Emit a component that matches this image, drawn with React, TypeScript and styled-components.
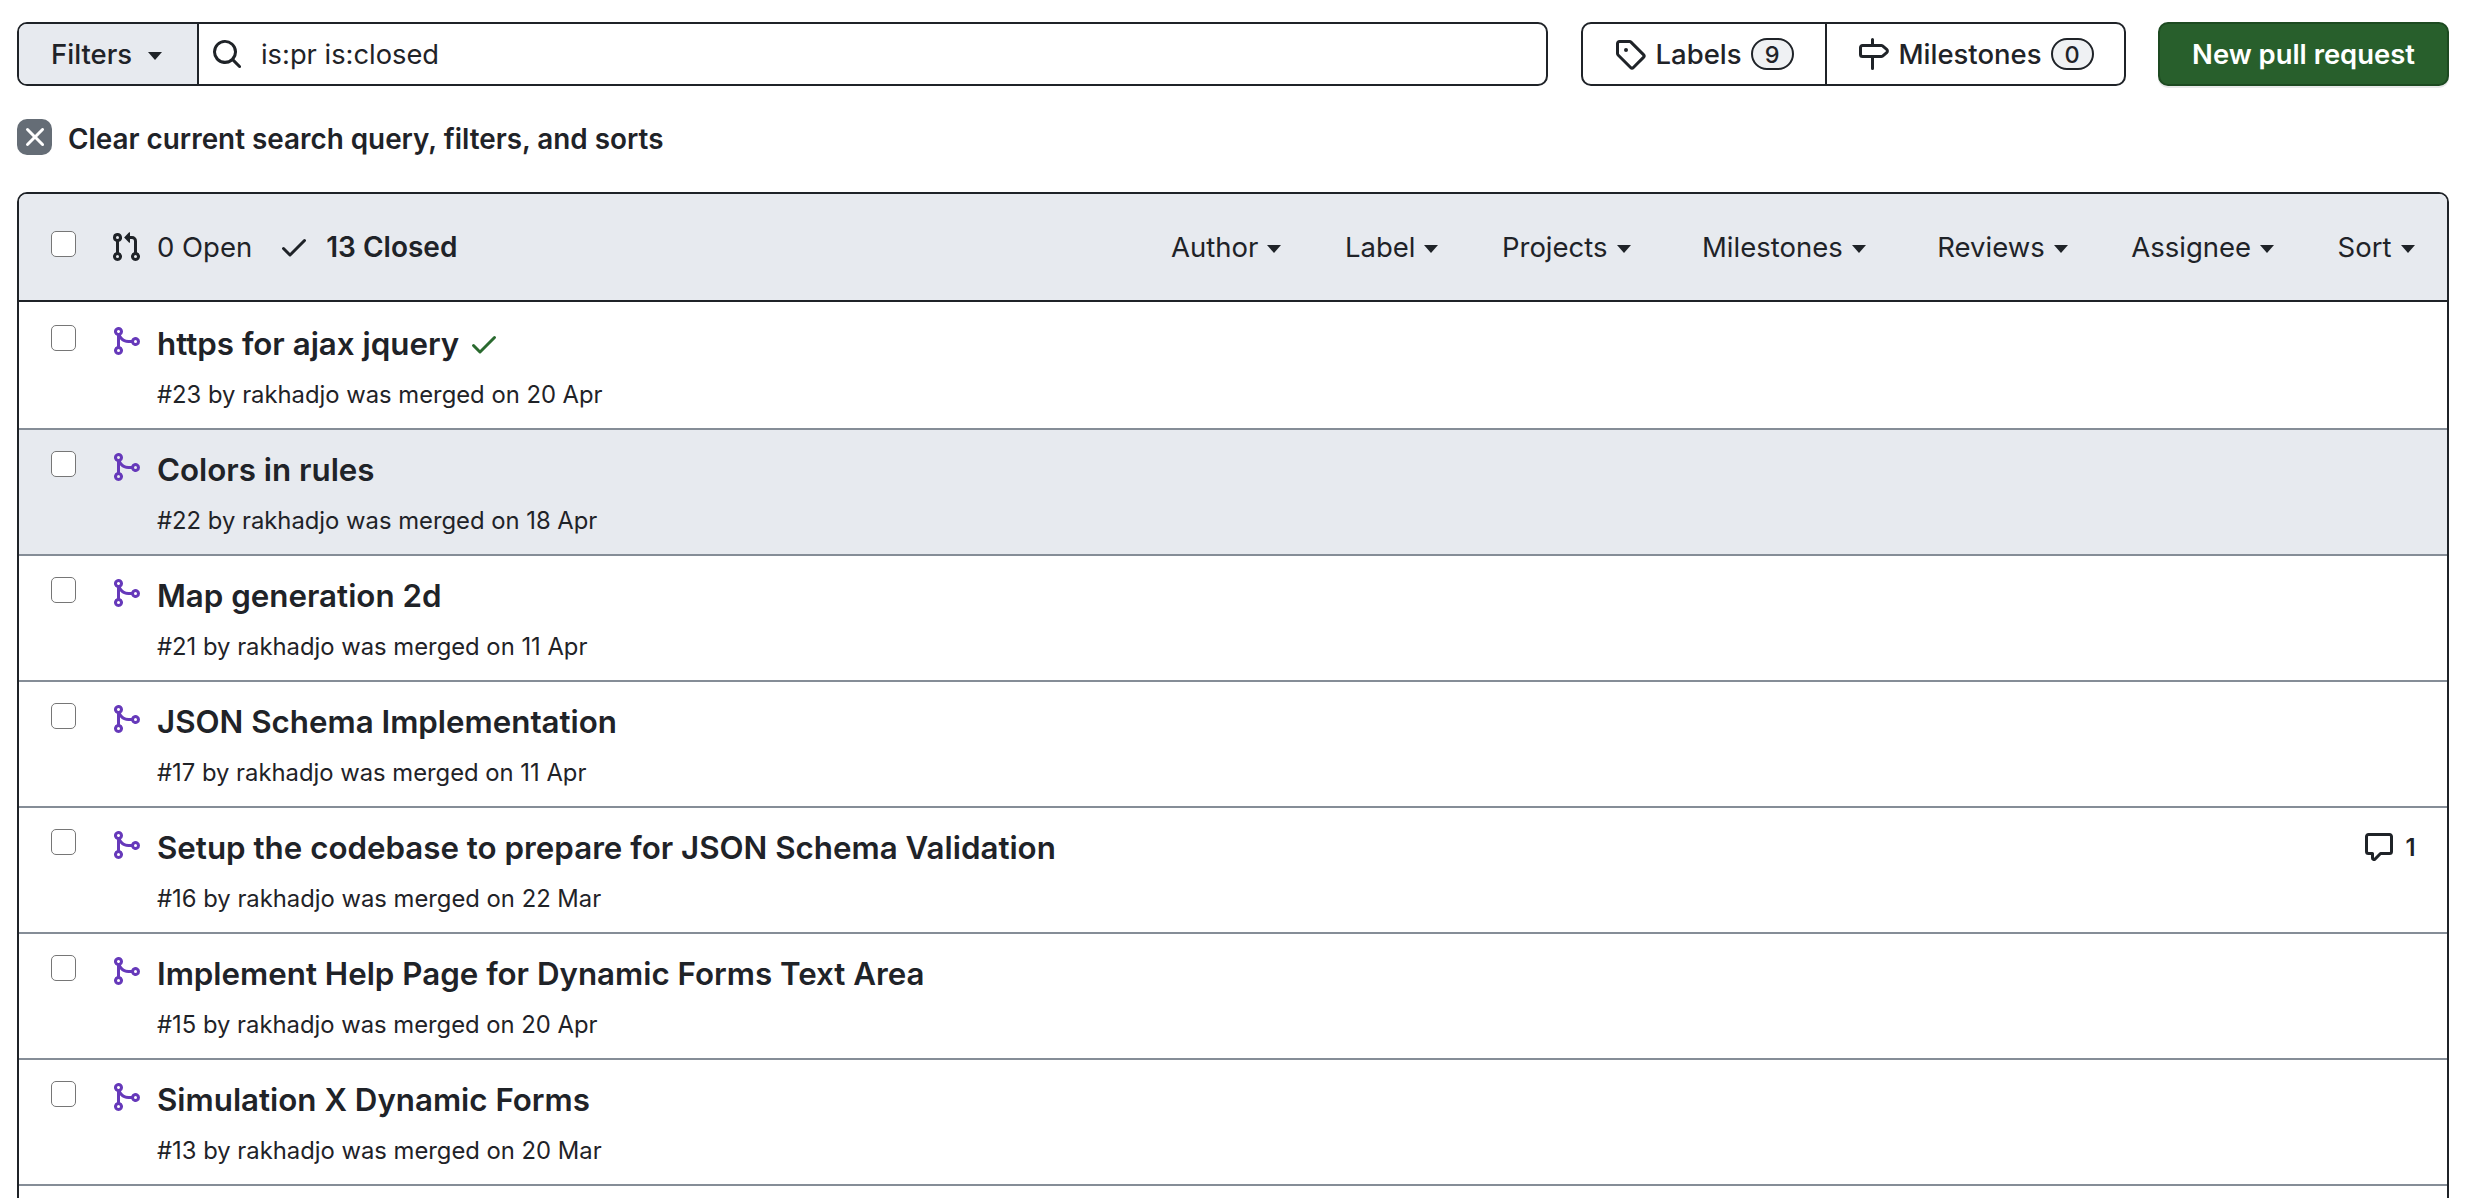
import React from "react";
import styled, { createGlobalStyle } from "styled-components";

const Global = createGlobalStyle`
  html, body { margin: 0; padding: 0; height: 1198px; overflow: hidden; background: #fff; }
  body { font-family: Inter, "Liberation Sans", sans-serif; color: #1f2328; }
  * { box-sizing: border-box; }
`;

const paths: Record<string, string> = {
  pr: "M1.5 3.25a2.25 2.25 0 1 1 3 2.122v5.256a2.251 2.251 0 1 1-1.5 0V5.372A2.25 2.25 0 0 1 1.5 3.25Zm5.677-.177L9.573.677A.25.25 0 0 1 10 .854V2.5h1A2.5 2.5 0 0 1 13.5 5v5.628a2.251 2.251 0 1 1-1.5 0V5a1 1 0 0 0-1-1h-1v1.646a.25.25 0 0 1-.427.177L7.177 3.427a.25.25 0 0 1 0-.354ZM3.75 2.5a.75.75 0 1 0 0 1.5.75.75 0 0 0 0-1.5Zm0 9.5a.75.75 0 1 0 0 1.5.75.75 0 0 0 0-1.5Zm8.25.75a.75.75 0 1 0 1.5 0 .75.75 0 0 0-1.5 0Z",
  merge: "M5.45 5.154A4.25 4.25 0 0 0 9.25 7.5h1.378a2.251 2.251 0 1 1 0 1.5H9.25A5.734 5.734 0 0 1 5 7.123v3.505a2.25 2.25 0 1 1-1.5 0V5.372a2.25 2.25 0 1 1 1.95-.218ZM4.25 13.5a.75.75 0 1 0 0-1.5.75.75 0 0 0 0 1.5Zm8.5-4.5a.75.75 0 1 0 0-1.5.75.75 0 0 0 0 1.5ZM5 3.25a.75.75 0 1 0 0 .005V3.25Z",
  check: "M13.78 4.22a.75.75 0 0 1 0 1.06l-7.25 7.25a.75.75 0 0 1-1.06 0L2.22 9.28a.751.751 0 0 1 .018-1.042.751.751 0 0 1 1.042-.018L6 10.94l6.72-6.72a.75.75 0 0 1 1.06 0Z",
  search: "M10.68 11.74a6 6 0 0 1-7.922-8.982 6 6 0 0 1 8.982 7.922l3.04 3.04a.749.749 0 0 1-.326 1.275.749.749 0 0 1-.734-.215ZM11.5 7a4.499 4.499 0 1 0-8.997 0A4.499 4.499 0 0 0 11.5 7Z",
  tag: "M1 7.775V2.75C1 1.784 1.784 1 2.75 1h5.025c.464 0 .91.184 1.238.513l6.25 6.25a1.75 1.75 0 0 1 0 2.474l-5.026 5.026a1.75 1.75 0 0 1-2.474 0l-6.25-6.25A1.752 1.752 0 0 1 1 7.775Zm1.5 0c0 .066.026.13.073.177l6.25 6.25a.25.25 0 0 0 .354 0l5.025-5.025a.25.25 0 0 0 0-.354l-6.25-6.25a.25.25 0 0 0-.177-.073H2.75a.25.25 0 0 0-.25.25ZM6 5a1 1 0 1 1 0 2 1 1 0 0 1 0-2Z",
  milestone: "M7.75 0a.75.75 0 0 1 .75.75V3h3.634c.414 0 .814.147 1.13.414l2.07 1.75a1.75 1.75 0 0 1 0 2.672l-2.07 1.75a1.75 1.75 0 0 1-1.13.414H8.5v5.25a.75.75 0 0 1-1.5 0V10H2.75A1.75 1.75 0 0 1 1 8.25v-3.5C1 3.784 1.784 3 2.75 3H7V.75A.75.75 0 0 1 7.75 0Zm4.384 8.5a.25.25 0 0 0 .161-.06l2.07-1.75a.248.248 0 0 0 0-.38l-2.07-1.75a.25.25 0 0 0-.161-.06H2.75a.25.25 0 0 0-.25.25v3.5c0 .138.112.25.25.25h9.384Z",
  comment: "M1 2.75C1 1.784 1.784 1 2.75 1h10.5c.966 0 1.75.784 1.75 1.75v7.5A1.75 1.75 0 0 1 13.25 12H9.06l-2.573 2.573A1.458 1.458 0 0 1 4 13.543V12H2.75A1.75 1.75 0 0 1 1 10.25Zm1.75-.25a.25.25 0 0 0-.25.25v7.5c0 .138.112.25.25.25h2a.75.75 0 0 1 .75.75v2.19l2.72-2.72a.749.749 0 0 1 .53-.22h4.5a.25.25 0 0 0 .25-.25v-7.5a.25.25 0 0 0-.25-.25Z",
  x: "M3.72 3.72a.75.75 0 0 1 1.06 0L8 6.94l3.22-3.22a.749.749 0 0 1 1.275.326.749.749 0 0 1-.215.734L9.06 8l3.22 3.22a.749.749 0 0 1-.326 1.275.749.749 0 0 1-.734-.215L8 9.06l-3.22 3.22a.751.751 0 0 1-1.042-.018.751.751 0 0 1-.018-1.042L6.94 8 3.72 4.78a.75.75 0 0 1 0-1.06Z",
};

const Svg = styled.svg<{ $color?: string }>`
  display: block;
  flex: none;
  fill: ${(p) => p.$color ?? "currentColor"};
`;

const Icon = ({ name, size = 32, color }: { name: string; size?: number; color?: string }) => (
  <Svg viewBox="0 0 16 16" width={size} height={size} $color={color} aria-hidden="true">
    <path fillRule="evenodd" d={paths[name]} />
  </Svg>
);

const Page = styled.div`
  padding: 22px 23px 0 17px;
`;

const Toolbar = styled.div`
  display: flex;
  align-items: stretch;
  height: 64px;
`;

const SearchGroup = styled.div`
  flex: 1;
  display: flex;
  border: 2.5px solid #1f2328;
  border-radius: 10px;
  overflow: hidden;
  margin-right: 33px;
`;

const FiltersButton = styled.div`
  width: 180px;
  display: flex;
  align-items: center;
  padding-left: 32px;
  gap: 16px;
  background: #e7eaef;
  border-right: 2.5px solid #1f2328;
  font-size: 27.5px;
  font-weight: 500;
`;

const SearchField = styled.div`
  flex: 1;
  display: flex;
  align-items: center;
  padding-left: 12px;
  gap: 18px;
  font-size: 27.3px;
  color: #1f2328;
`;

const Caret = styled.span`
  display: inline-block;
  width: 0;
  height: 0;
  margin-top: 4px;
  flex: none;
  border-style: solid;
  border-color: #1f2328 transparent transparent;
  border-width: 8px 7.5px 0;
`;

const LinksGroup = styled.div`
  display: flex;
  border: 2.5px solid #1f2328;
  border-radius: 10px;
  margin-right: 32px;
`;

const LinkItem = styled.div<{ $first?: boolean; $width: number }>`
  width: ${(p) => p.$width}px;
  display: flex;
  align-items: center;
  justify-content: center;
  gap: 9px;
  font-size: 27.5px;
  font-weight: 500;
  border-left: ${(p) => (p.$first ? "none" : "2.5px solid #1f2328")};
`;

const Counter = styled.span`
  min-width: 43px;
  height: 32px;
  padding: 0 10px;
  display: inline-flex;
  align-items: center;
  justify-content: center;
  border: 2px solid #1f2328;
  border-radius: 16px;
  background: #eff1f3;
  font-size: 23.5px;
  font-weight: 500;
`;

const PrimaryButton = styled.div`
  width: 291px;
  display: flex;
  align-items: center;
  justify-content: center;
  background: #285f2c;
  border: 2px solid #1d4a21;
  border-radius: 10px;
  box-shadow: 0 2px 0 rgba(31, 35, 40, 0.1);
  color: #fff;
  font-size: 27.4px;
  font-weight: 600;
`;

const ClearRow = styled.div`
  display: flex;
  align-items: center;
  gap: 16px;
  margin: 33px 0 37px;
  height: 36px;
  font-size: 27.85px;
  font-weight: 600;
`;

const ClearText = styled.span`
  padding-top: 3px;
`;

const ClearIcon = styled.span`
  width: 35px;
  height: 36px;
  display: flex;
  align-items: center;
  justify-content: center;
  background: #656d76;
  border-radius: 10px;
  color: #fff;
`;

const Table = styled.div`
  border: 2.5px solid #1f2328;
  border-radius: 10px;
  height: 1100px;
  overflow: hidden;
`;

const TableHeader = styled.div`
  height: 108px;
  display: flex;
  align-items: center;
  background: #e7eaef;
  border-bottom: 2.5px solid #1f2328;
  padding: 0 32.5px 0 32px;
  font-size: 27.5px;
`;

const Checkbox = styled.input.attrs({ type: "checkbox" })`
  appearance: none;
  width: 25px;
  height: 26px;
  margin: 0;
  flex: none;
  background: #fff;
  border: 1.5px solid #767676;
  border-radius: 5px;
`;

const HeaderCheckbox = styled(Checkbox)`
  margin-bottom: 6px;
`;

const States = styled.div`
  display: flex;
  align-items: center;
  margin-left: 34px;
  flex: 1;
`;

const StateLink = styled.span<{ $active?: boolean }>`
  display: flex;
  align-items: center;
  gap: ${(p) => (p.$active ? "16px" : "15px")};
  margin-right: 26px;
  font-weight: ${(p) => (p.$active ? 600 : 400)};
  font-size: ${(p) => (p.$active ? "28px" : "27.5px")};
`;

const Menus = styled.div`
  display: flex;
  align-items: center;
  gap: 63.5px;
`;

const Menu = styled.span<{ $wide?: boolean }>`
  display: flex;
  align-items: center;
  gap: 9px;
  margin: 0 ${(p) => (p.$wide ? "8px" : "0")};
`;

const RowList = styled.div`
  padding-top: 1.5px;
`;

const Row = styled.div<{ $hover?: boolean }>`
  height: 126px;
  display: flex;
  align-items: flex-start;
  padding: 21.5px 31.5px 0 32px;
  background: ${(p) => (p.$hover ? "#e7eaef" : "#fff")};
  border-bottom: 2px solid #858d97;
`;

const IconSlot = styled.div`
  margin-left: 34px;
  margin-right: 15px;
`;

const RowBody = styled.div`
  flex: 1;
  min-width: 0;
`;

const TitleLine = styled.div`
  display: flex;
  align-items: center;
  gap: 9px;
  height: 38px;
  font-size: 31.3px;
  font-weight: 600;
`;

const Meta = styled.div`
  margin-top: 18px;
  height: 28px;
  line-height: 28px;
  font-size: 23.8px;
  color: #1f2328;
`;

const CommentCount = styled.div`
  display: flex;
  align-items: center;
  gap: 10px;
  padding-top: 2px;
  font-size: 23.7px;
  font-weight: 600;
`;

const rows = [
  { title: "https for ajax jquery", num: 23, date: "20 Apr", check: true },
  { title: "Colors in rules", num: 22, date: "18 Apr", hover: true },
  { title: "Map generation 2d", num: 21, date: "11 Apr" },
  { title: "JSON Schema Implementation", num: 17, date: "11 Apr" },
  { title: "Setup the codebase to prepare for JSON Schema Validation", num: 16, date: "22 Mar", comments: 1 },
  { title: "Implement Help Page for Dynamic Forms Text Area", num: 15, date: "20 Apr" },
  { title: "Simulation X Dynamic Forms", num: 13, date: "20 Mar" },
];

const menus = ["Author", "Label", "Projects", "Milestones", "Reviews", "Assignee", "Sort"];

export default function App() {
  return (
    <Page>
      <Global />
      <Toolbar>
        <SearchGroup>
          <FiltersButton>
            Filters <Caret />
          </FiltersButton>
          <SearchField>
            <Icon name="search" />
            is:pr is:closed
          </SearchField>
        </SearchGroup>
        <LinksGroup>
          <LinkItem $first $width={242}>
            <Icon name="tag" />
            Labels
            <Counter>9</Counter>
          </LinkItem>
          <LinkItem $width={299}>
            <Icon name="milestone" />
            Milestones
            <Counter>0</Counter>
          </LinkItem>
        </LinksGroup>
        <PrimaryButton>New pull request</PrimaryButton>
      </Toolbar>
      <ClearRow>
        <ClearIcon>
          <Icon name="x" />
        </ClearIcon>
        <ClearText>Clear current search query, filters, and sorts</ClearText>
      </ClearRow>
      <Table>
        <TableHeader>
          <HeaderCheckbox />
          <States>
            <StateLink>
              <Icon name="pr" />0 Open
            </StateLink>
            <StateLink $active>
              <Icon name="check" />
              13 Closed
            </StateLink>
          </States>
          <Menus>
            {menus.map((m) => (
              <Menu key={m} $wide={m === "Milestones"}>
                {m} <Caret />
              </Menu>
            ))}
          </Menus>
        </TableHeader>
        <RowList>
          {rows.map((r) => (
            <Row key={r.num} $hover={r.hover}>
              <Checkbox />
              <IconSlot>
                <Icon name="merge" color="#6639ba" />
              </IconSlot>
              <RowBody>
                <TitleLine>
                  {r.title}
                  {r.check && <Icon name="check" color="#2a6a2f" />}
                </TitleLine>
                <Meta>
                  #{r.num} by rakhadjo was merged on {r.date}
                </Meta>
              </RowBody>
              {r.comments && (
                <CommentCount>
                  <Icon name="comment" />
                  {r.comments}
                </CommentCount>
              )}
            </Row>
          ))}
        </RowList>
      </Table>
    </Page>
  );
}
